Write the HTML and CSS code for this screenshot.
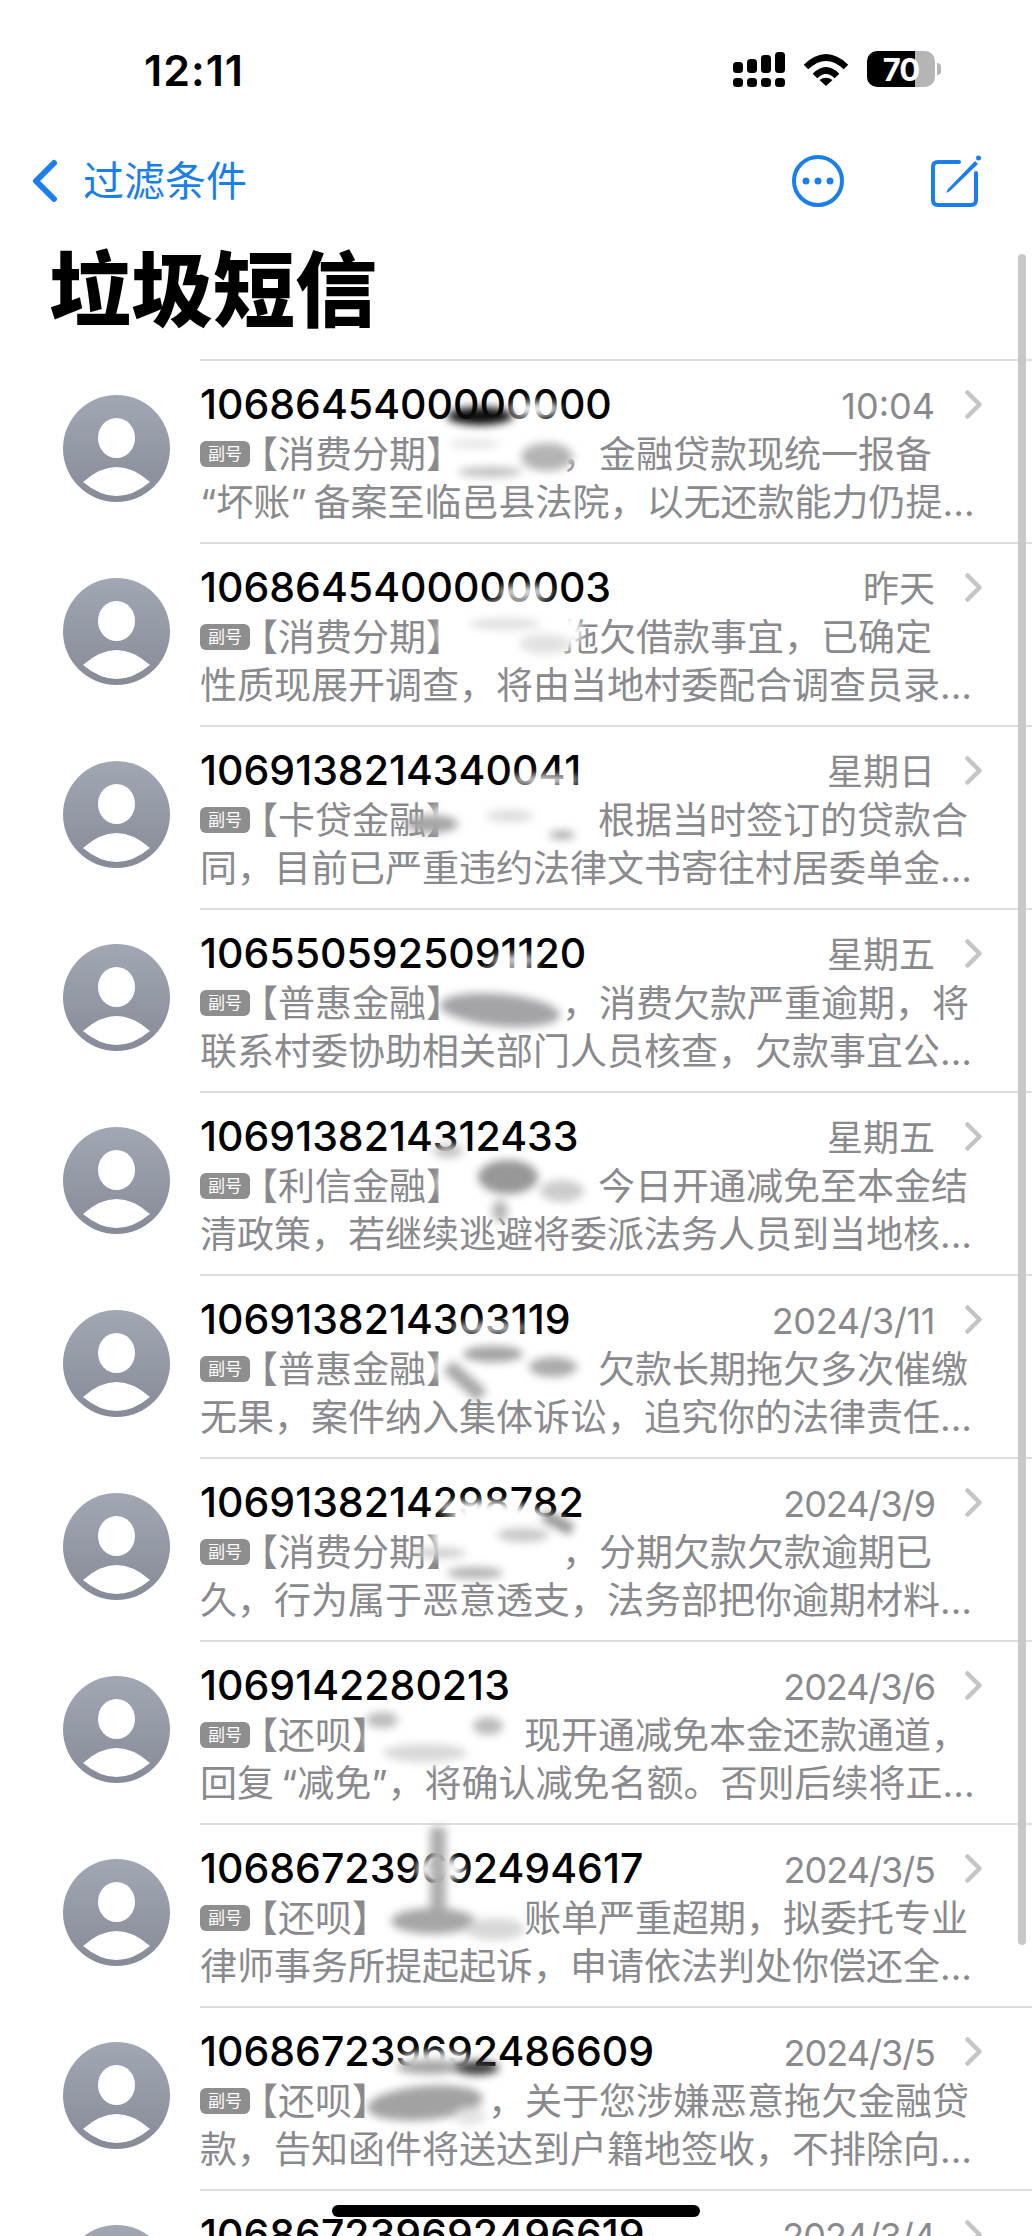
FILE: index.html
```html
<!DOCTYPE html>
<html lang="zh-CN">
<head>
    <meta charset="UTF-8">
    <meta name="viewport" content="width=device-width, initial-scale=1.0">
    <title>垃圾短信</title>
    <link rel="stylesheet" href="styles.css">
</head>
<body>
    <div class="status-bar">
        <span class="clock">12:11</span>
        <div class="status-icons">
            <svg class="signal" viewBox="0 0 52 35">
                <rect x="0" y="10" width="10" height="11" rx="3.5"/>
                <rect x="14" y="7" width="10" height="14" rx="3.5"/>
                <rect x="28" y="3" width="10" height="18" rx="3.5"/>
                <rect x="42" y="0" width="10" height="21" rx="3.5"/>
                <rect x="0" y="26" width="10" height="9" rx="3.5"/>
                <rect x="14" y="26" width="10" height="9" rx="3.5"/>
                <rect x="28" y="26" width="10" height="9" rx="3.5"/>
                <rect x="42" y="26" width="10" height="9" rx="3.5"/>
            </svg>
            <svg class="wifi" viewBox="0 0 46 34">
                <path d="M3 15Q23 -4 43 15" fill="none" stroke="#000" stroke-width="6.5"/>
                <path d="M12 24Q23 13 34 24" fill="none" stroke="#000" stroke-width="6.5"/>
                <path d="M16.500 28Q23 23.500 29.500 28L23 34Z"/>
            </svg>
            <div class="battery"><span>70</span></div>
            <span class="battery-cap"></span>
        </div>
    </div>

    <div class="nav">
        <svg class="back-icon" viewBox="0 0 26 44">
            <path d="M22 4L4 22L22 40" fill="none" stroke="#1a7fec" stroke-width="6" stroke-linecap="round" stroke-linejoin="round"/>
        </svg>
        <span class="back-label">过滤条件</span>
        <svg class="more-icon" viewBox="0 0 52 52">
            <circle cx="26" cy="26" r="24" fill="none" stroke="#1a7fec" stroke-width="4"/>
            <circle cx="14" cy="26" r="3.500" fill="#1a7fec"/>
            <circle cx="26" cy="26" r="3.500" fill="#1a7fec"/>
            <circle cx="38" cy="26" r="3.500" fill="#1a7fec"/>
        </svg>
        <svg class="compose-icon" viewBox="0 0 50 52">
            <path d="M28 7H7Q2 7 2 12V45Q2 50 7 50H40Q45 50 45 45V18" fill="none" stroke="#1a7fec" stroke-width="4" stroke-linecap="round"/>
            <path d="M17 34L44 6L47 9L19 36L15 38Z" fill="#1a7fec"/>
            <circle cx="47.500" cy="3" r="2.500" fill="#1a7fec"/>
        </svg>
    </div>

    <h1 class="title">垃圾短信</h1>

    <div class="list">
        <div class="row">
            <svg class="avatar" viewBox="0 0 107 107"><use href="#person"/></svg>
            <div class="row-main">
                <div class="row-head">
                    <span class="sender">1068645400000000</span>
                    <span class="when">10:04</span>
                    <svg class="chevron" viewBox="0 0 17 29"><path d="M2.500 2.500L14.500 14.500L2.500 26.500"/></svg>
                </div>
                <div class="line"><span class="badge">副号</span>【消费分期】<span class="gap gap-m"></span>，金融贷款现统一报备</div>
                <div class="line">“坏账<span class="quote-end">”</span>备案至临邑县法院，以无还款能力仍提...</div>
            </div>
            <svg class="smudge" viewBox="0 0 300 183">
                <ellipse cx="170" cy="92" rx="68" ry="30" fill="#fff"/>
                <ellipse cx="195" cy="50" rx="26" ry="7" fill="#fff"/>
                <ellipse cx="140" cy="57" rx="33" ry="9" fill="#0c0c0c"/>
                <ellipse cx="207" cy="98" rx="26" ry="14" fill="#b4b4b4"/>
                <ellipse cx="150" cy="113" rx="32" ry="5" fill="#bdbdbd"/>
                <ellipse cx="135" cy="85" rx="26" ry="4" fill="#e2e2e2"/>
            </svg>
        </div>

        <div class="row">
            <svg class="avatar" viewBox="0 0 107 107"><use href="#person"/></svg>
            <div class="row-main">
                <div class="row-head">
                    <span class="sender">1068645400000003</span>
                    <span class="when">昨天</span>
                    <svg class="chevron" viewBox="0 0 17 29"><path d="M2.500 2.500L14.500 14.500L2.500 26.500"/></svg>
                </div>
                <div class="line"><span class="badge">副号</span>【消费分期】<span class="gap gap-m"></span>拖欠借款事宜，已确定</div>
                <div class="line">性质现展开调查，将由当地村委配合调查员录...</div>
            </div>
            <svg class="smudge" viewBox="0 0 300 183">
                <ellipse cx="170" cy="90" rx="72" ry="30" fill="#fff"/>
                <ellipse cx="185" cy="50" rx="28" ry="6" fill="#fff"/>
                <ellipse cx="165" cy="82" rx="36" ry="6" fill="#e0e0e0"/>
                <ellipse cx="205" cy="102" rx="26" ry="10" fill="#e2e2e2"/>
            </svg>
        </div>

        <div class="row">
            <svg class="avatar" viewBox="0 0 107 107"><use href="#person"/></svg>
            <div class="row-main">
                <div class="row-head">
                    <span class="sender">1069138214340041</span>
                    <span class="when">星期日</span>
                    <svg class="chevron" viewBox="0 0 17 29"><path d="M2.500 2.500L14.500 14.500L2.500 26.500"/></svg>
                </div>
                <div class="line"><span class="badge">副号</span>【卡贷金融】<span class="gap gap-l"></span>根据当时签订的贷款合</div>
                <div class="line">同，目前已严重违约法律文书寄往村居委单金...</div>
            </div>
            <svg class="smudge" viewBox="0 0 300 183">
                <ellipse cx="160" cy="96" rx="76" ry="22" fill="#fff"/>
                <ellipse cx="205" cy="55" rx="36" ry="5" fill="#fff"/>
                <ellipse cx="92" cy="99" rx="26" ry="9" fill="#a4a4a4"/>
                <ellipse cx="170" cy="91" rx="24" ry="6" fill="#dcdcdc"/>
                <ellipse cx="222" cy="110" rx="13" ry="4" fill="#a4a4a4"/>
            </svg>
        </div>

        <div class="row">
            <svg class="avatar" viewBox="0 0 107 107"><use href="#person"/></svg>
            <div class="row-main">
                <div class="row-head">
                    <span class="sender">1065505925091120</span>
                    <span class="when">星期五</span>
                    <svg class="chevron" viewBox="0 0 17 29"><path d="M2.500 2.500L14.500 14.500L2.500 26.500"/></svg>
                </div>
                <div class="line"><span class="badge">副号</span>【普惠金融】<span class="gap gap-m"></span>，消费欠款严重逾期，将</div>
                <div class="line">联系村委协助相关部门人员核查，欠款事宜公...</div>
            </div>
            <svg class="smudge" viewBox="0 0 300 183">
                <ellipse cx="165" cy="85" rx="62" ry="24" fill="#fff"/>
                <ellipse cx="175" cy="52" rx="24" ry="5" fill="#fff"/>
                <ellipse cx="160" cy="102" rx="60" ry="16" fill="#a3a3a8" transform="rotate(5 160 102)"/>
            </svg>
        </div>

        <div class="row">
            <svg class="avatar" viewBox="0 0 107 107"><use href="#person"/></svg>
            <div class="row-main">
                <div class="row-head">
                    <span class="sender">1069138214312433</span>
                    <span class="when">星期五</span>
                    <svg class="chevron" viewBox="0 0 17 29"><path d="M2.500 2.500L14.500 14.500L2.500 26.500"/></svg>
                </div>
                <div class="line"><span class="badge">副号</span>【利信金融】<span class="gap gap-l"></span>今日开通减免至本金结</div>
                <div class="line">清政策，若继续逃避将委派法务人员到当地核...</div>
            </div>
            <svg class="smudge" viewBox="0 0 300 183">
                <ellipse cx="170" cy="92" rx="72" ry="28" fill="#fff"/>
                <ellipse cx="108" cy="60" rx="15" ry="7" fill="#c4c4c4"/>
                <ellipse cx="168" cy="86" rx="30" ry="17" fill="#979797"/>
                <ellipse cx="222" cy="100" rx="22" ry="11" fill="#cccccc"/>
                <ellipse cx="160" cy="120" rx="8" ry="11" fill="#b5b5b5"/>
            </svg>
        </div>

        <div class="row">
            <svg class="avatar" viewBox="0 0 107 107"><use href="#person"/></svg>
            <div class="row-main">
                <div class="row-head">
                    <span class="sender">1069138214303119</span>
                    <span class="when date-long">2024/3/11</span>
                    <svg class="chevron" viewBox="0 0 17 29"><path d="M2.500 2.500L14.500 14.500L2.500 26.500"/></svg>
                </div>
                <div class="line"><span class="badge">副号</span>【普惠金融】<span class="gap gap-l"></span>欠款长期拖欠多次催缴</div>
                <div class="line">无果，案件纳入集体诉讼，追究你的法律责任...</div>
            </div>
            <svg class="smudge" viewBox="0 0 300 183">
                <ellipse cx="165" cy="94" rx="70" ry="26" fill="#fff"/>
                <ellipse cx="150" cy="54" rx="40" ry="4" fill="#fff"/>
                <ellipse cx="153" cy="80" rx="30" ry="8" fill="#a2a2a2"/>
                <ellipse cx="213" cy="93" rx="24" ry="10" fill="#ababab"/>
                <path d="M108 92L142 122" fill="none" stroke="#a8a8a8" stroke-width="15"/>
            </svg>
        </div>

        <div class="row">
            <svg class="avatar" viewBox="0 0 107 107"><use href="#person"/></svg>
            <div class="row-main">
                <div class="row-head">
                    <span class="sender">1069138214298782</span>
                    <span class="when date">2024/3/9</span>
                    <svg class="chevron" viewBox="0 0 17 29"><path d="M2.500 2.500L14.500 14.500L2.500 26.500"/></svg>
                </div>
                <div class="line"><span class="badge">副号</span>【消费分期】<span class="gap gap-m"></span>，分期欠款欠款逾期已</div>
                <div class="line">久，行为属于恶意透支，法务部把你逾期材料...</div>
            </div>
            <svg class="smudge" viewBox="0 0 300 183">
                <ellipse cx="165" cy="80" rx="72" ry="30" fill="#fff"/>
                <ellipse cx="140" cy="50" rx="44" ry="6" fill="#fff"/>
                <path d="M204 58L232 73" fill="none" stroke="#949494" stroke-width="12"/>
                <ellipse cx="183" cy="78" rx="26" ry="7" fill="#c8c8c8"/>
                <ellipse cx="100" cy="96" rx="26" ry="5" fill="#cccccc"/>
                <ellipse cx="135" cy="116" rx="28" ry="6" fill="#b2b2b2"/>
            </svg>
        </div>

        <div class="row">
            <svg class="avatar" viewBox="0 0 107 107"><use href="#person"/></svg>
            <div class="row-main">
                <div class="row-head">
                    <span class="sender">1069142280213</span>
                    <span class="when date">2024/3/6</span>
                    <svg class="chevron" viewBox="0 0 17 29"><path d="M2.500 2.500L14.500 14.500L2.500 26.500"/></svg>
                </div>
                <div class="line"><span class="badge">副号</span>【还呗】<span class="gap gap-l"></span>现开通减免本金还款通道，</div>
                <div class="line">回复<span class="quote-start">“</span>减免”，将确认减免名额。否则后续将正...</div>
            </div>
            <svg class="smudge" viewBox="0 0 300 183">
                <ellipse cx="88" cy="100" rx="62" ry="26" fill="#fff"/>
                <ellipse cx="42" cy="80" rx="16" ry="8" fill="#bbb"/>
                <ellipse cx="148" cy="86" rx="15" ry="9" fill="#bbb"/>
                <ellipse cx="85" cy="113" rx="42" ry="9" fill="#d8d8d8"/>
            </svg>
        </div>

        <div class="row">
            <svg class="avatar" viewBox="0 0 107 107"><use href="#person"/></svg>
            <div class="row-main">
                <div class="row-head">
                    <span class="sender">106867239692494617</span>
                    <span class="when date">2024/3/5</span>
                    <svg class="chevron" viewBox="0 0 17 29"><path d="M2.500 2.500L14.500 14.500L2.500 26.500"/></svg>
                </div>
                <div class="line"><span class="badge">副号</span>【还呗】<span class="gap gap-l"></span>账单严重超期，拟委托专业</div>
                <div class="line">律师事务所提起起诉，申请依法判处你偿还全...</div>
            </div>
            <svg class="smudge" viewBox="0 0 300 183">
                <ellipse cx="100" cy="46" rx="24" ry="12" fill="#fff"/>
                <path d="M98 4V90" fill="none" stroke="#adadad" stroke-width="16"/>
                <ellipse cx="93" cy="98" rx="42" ry="13" fill="#a6a6a6"/>
                <ellipse cx="155" cy="106" rx="30" ry="11" fill="#d8d8d8"/>
            </svg>
        </div>

        <div class="row">
            <svg class="avatar" viewBox="0 0 107 107"><use href="#person"/></svg>
            <div class="row-main">
                <div class="row-head">
                    <span class="sender">106867239692486609</span>
                    <span class="when date">2024/3/5</span>
                    <svg class="chevron" viewBox="0 0 17 29"><path d="M2.500 2.500L14.500 14.500L2.500 26.500"/></svg>
                </div>
                <div class="line"><span class="badge">副号</span>【还呗】<span class="gap gap-m"></span>，关于您涉嫌恶意拖欠金融贷</div>
                <div class="line">款，告知函件将送达到户籍地签收，不排除向...</div>
            </div>
            <svg class="smudge" viewBox="0 0 300 183">
                <ellipse cx="95" cy="52" rx="36" ry="6" fill="#fff"/>
                <ellipse cx="90" cy="61" rx="34" ry="7" fill="#a4a4a4"/>
                <ellipse cx="137" cy="62" rx="22" ry="7" fill="#3c3c3c"/>
                <ellipse cx="85" cy="97" rx="58" ry="17" fill="#a2a2a2" transform="rotate(-5 85 97)"/>
                <ellipse cx="130" cy="110" rx="16" ry="9" fill="#e4e4e4"/>
            </svg>
        </div>

        <div class="row">
            <svg class="avatar" viewBox="0 0 107 107"><use href="#person"/></svg>
            <div class="row-main">
                <div class="row-head">
                    <span class="sender">106867239692496619</span>
                    <span class="when date">2024/3/4</span>
                    <svg class="chevron" viewBox="0 0 17 29"><path d="M2.500 2.500L14.500 14.500L2.500 26.500"/></svg>
                </div>
            </div>
        </div>
    </div>

    <div class="scroll-thumb"></div>
    <div class="home-bar"></div>

    <svg class="defs" width="0" height="0">
        <defs>
            <linearGradient id="avatarFill" x1="0" y1="0" x2="0" y2="1">
                <stop offset="0" stop-color="#a2a7b4"/>
                <stop offset="1" stop-color="#878b98"/>
            </linearGradient>
            <g id="person">
                <circle cx="53.500" cy="53.500" r="53.500" fill="url(#avatarFill)"/>
                <ellipse cx="53.500" cy="43" rx="18.500" ry="20" fill="#fff"/>
                <path d="M20 87Q53.500 57 87 87Q53.500 115 20 87Z" fill="#fff"/>
            </g>
        </defs>
    </svg>
</body>
</html>
```

FILE: styles.css
```css
body {
    margin: 0;
    height: 2236px;
    overflow: hidden;
    position: relative;
    background-color: #fff;
    color: #000;
    font-family: Inter, "Noto Sans CJK SC", sans-serif;
}
.status-bar {
    display: flex;
    align-items: center;
    justify-content: space-between;
    height: 36px;
    margin-top: 51px;
    padding: 0 91px 0 144px;
}
.clock {
    padding-top: 2px;
    font-size: 43px;
    font-weight: 600;
    line-height: 36px;
    letter-spacing: 1px;
}
.status-icons {
    display: flex;
    align-items: center;
}
.signal {
    width: 52px;
    height: 35px;
}
.wifi {
    width: 46px;
    height: 34px;
    margin-left: 18px;
}
.battery {
    display: flex;
    align-items: center;
    justify-content: center;
    width: 68px;
    height: 36px;
    margin-left: 18px;
    border-radius: 10px;
    background: linear-gradient(to right, #000 70%, #b5b5b5 70%);
    color: #fff;
    font-size: 31px;
    font-weight: 700;
    letter-spacing: -1px;
}
.battery-cap {
    width: 4px;
    height: 12px;
    margin-left: 2px;
    border-radius: 0 4px 4px 0;
    background-color: #b5b5b5;
}
.nav {
    display: flex;
    align-items: center;
    height: 52px;
    margin-top: 68px;
    padding-left: 32px;
    color: #1a7fec;
}
.back-icon {
    width: 26px;
    height: 44px;
}
.back-label {
    margin-left: 25px;
    font-size: 41px;
    line-height: 52px;
}
.more-icon {
    width: 52px;
    height: 52px;
    margin-left: 545px;
}
.compose-icon {
    width: 50px;
    height: 52px;
    margin-left: 87px;
}
.title {
    margin: 34px 0 18px;
    padding-left: 49px;
    font-size: 82px;
    font-weight: 900;
    line-height: 100px;
}
.row {
    display: flex;
    position: relative;
}
.avatar {
    flex: none;
    width: 107px;
    height: 107px;
    margin: 36px 0 0 63px;
}
.row-main {
    flex: 1;
    height: 181px;
    margin-left: 30px;
    border-top: 2px solid #dedede;
}
.row-head {
    display: flex;
    align-items: baseline;
    height: 70px;
    padding: 20px 50px 0 0;
    box-sizing: border-box;
}
.sender {
    flex: 1;
    font-size: 41px;
    font-weight: 500;
    line-height: 46px;
}
.when {
    color: #8a8a8e;
    font-size: 36px;
    line-height: 46px;
}
.date {
    letter-spacing: -1px;
}
.date-long {
    letter-spacing: -0.4px;
}
.chevron {
    align-self: center;
    width: 17px;
    height: 29px;
    margin: 0 0 4px 30px;
    fill: none;
    stroke: #c5c5c9;
    stroke-width: 4.500;
    stroke-linecap: round;
    stroke-linejoin: round;
}
.line {
    height: 48px;
    color: #8a8a8e;
    font-size: 37px;
    line-height: 48px;
    white-space: nowrap;
}
.badge {
    display: inline-block;
    width: 50px;
    height: 26px;
    margin-right: -9px;
    border-radius: 6px;
    background-color: #8e8e8e;
    color: #fff;
    font-size: 17px;
    line-height: 26px;
    text-align: center;
    vertical-align: 8px;
}
.gap {
    display: inline-block;
}
.gap-m {
    width: 99px;
}
.gap-l {
    width: 135px;
}
.quote-start {
    margin-left: 7px;
}
.quote-end {
    margin-right: 7px;
}
.smudge {
    position: absolute;
    left: 340px;
    top: 0;
    width: 300px;
    height: 183px;
    overflow: visible;
    filter: blur(4px);
}
.scroll-thumb {
    position: absolute;
    left: 1018px;
    top: 254px;
    width: 8px;
    height: 1691px;
    border-radius: 4px;
    background-color: #c8c8c8;
}
.home-bar {
    position: absolute;
    left: 332px;
    top: 2205px;
    width: 368px;
    height: 12px;
    border-radius: 6px;
    background-color: #000;
}
.defs {
    position: absolute;
}
```
